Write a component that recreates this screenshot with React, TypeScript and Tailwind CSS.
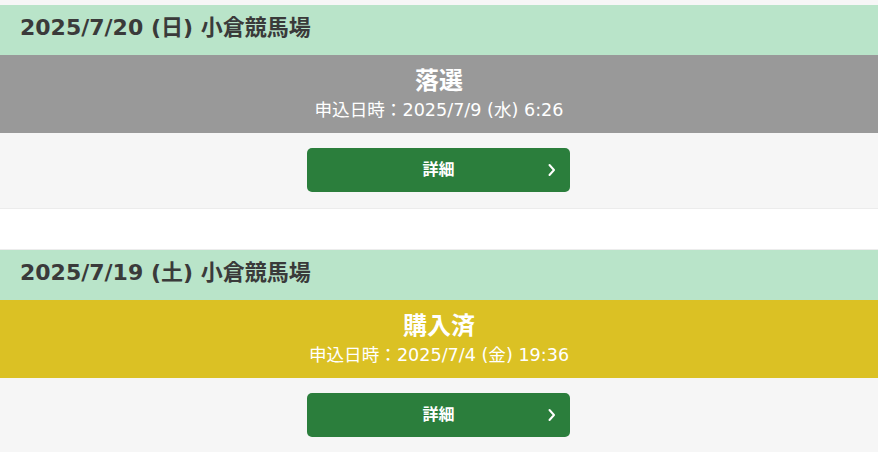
import React from 'react';

type Entry = {
  id: number;
  date: string;
  venue: string;
  status: string;
  statusBg: string;
  appliedAt: string;
};

const entries: Entry[] = [
  { id: 1, date: '2025/7/20 (日)', venue: '小倉競馬場', status: '落選', statusBg: 'bg-[#999999]', appliedAt: '2025/7/9 (水) 6:26' },
  { id: 2, date: '2025/7/19 (土)', venue: '小倉競馬場', status: '購入済', statusBg: 'bg-[#dbc124]', appliedAt: '2025/7/4 (金) 19:36' },
];

const font = "font-['DejaVu_Sans','Noto_Sans_CJK_JP',sans-serif]";

const Card: React.FC<{ entry: Entry }> = ({ entry }) => (
  <div className="border-b border-[#ececec]">
    <div className="h-[50px] bg-[#b9e4c9] px-5 pb-1 flex items-center">
      <h2 className="text-[22px] font-bold leading-[30px] text-[#3a3a3a]">
        {entry.date} {entry.venue}
      </h2>
    </div>
    <div className={`h-[78px] ${entry.statusBg} flex flex-col items-center justify-center text-white`}>
      <p className="text-[24px] font-bold leading-[32px]">{entry.status}</p>
      <p className="text-[17.6px] leading-[26px]">申込日時：{entry.appliedAt}</p>
    </div>
    <div className="h-[75px] bg-[#f6f6f6] pt-[15px] flex justify-center pr-px">
      <button className="relative w-[263px] h-[44px] rounded-[5px] bg-[#2b7e3c] text-white text-[16px] font-bold flex items-center justify-center">
        詳細
        <svg className="absolute right-[14px] top-1/2 -translate-y-1/2" width="8" height="13" viewBox="0 0 8 13" fill="none">
          <path d="M1.5 1.5 L6 6.5 L1.5 11.5" stroke="white" strokeWidth="2" strokeLinecap="round" strokeLinejoin="round" />
        </svg>
      </button>
    </div>
  </div>
);

const App: React.FC = () => (
  <div className={`w-[878px] h-[452px] overflow-hidden bg-white ${font}`}>
    <div className="h-[5px] bg-[#f6f6f6]" />
    {entries.map((e, i) => (
      <React.Fragment key={e.id}>
        {i > 0 && <div className="h-[41px] border-b border-[#ececec]" />}
        <Card entry={e} />
      </React.Fragment>
    ))}
  </div>
);

export default App;
